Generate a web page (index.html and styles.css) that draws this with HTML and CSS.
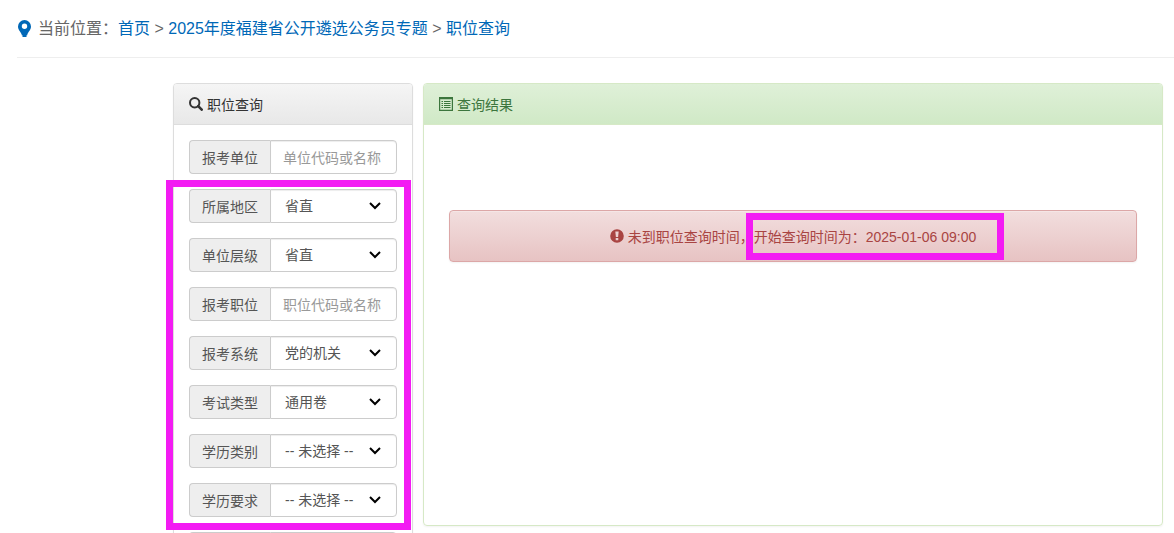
FILE: index.html
```html
<!DOCTYPE html>
<html lang="zh-CN">
<head>
    <meta charset="UTF-8">
    <meta name="viewport" content="width=device-width, initial-scale=1.0">
    <title>职位查询</title>
    <link rel="stylesheet" href="styles.css">
</head>
<body>
    <!-- Breadcrumb -->
    <nav class="location">
        <svg class="pin" viewBox="0 0 14 17"><path fill-rule="evenodd" d="M7 0a6.500 6.500 0 0 1 6.500 6.500c0 3.500-2.600 5-3.700 8v.8h-.8V17H5v-1.700h-.8v-.8C3.100 11.500.5 10 .5 6.500A6.500 6.500 0 0 1 7 0zm0 3.600a2.700 2.700 0 1 0 0 5.400 2.700 2.700 0 0 0 0-5.400z"/></svg>
        <div>当前位置：<a href="#">首页</a> &gt; <a href="#">2025年度福建省公开遴选公务员专题</a> &gt; <a href="#">职位查询</a></div>
    </nav>

    <main class="content">
        <!-- Search form -->
        <section class="panel panel-default">
            <h3 class="panel-heading">
                <svg class="icon" viewBox="0 0 14 14"><circle cx="5.700" cy="5.700" r="4.700" fill="none" stroke="currentColor" stroke-width="2"/><path d="M9.200 9.200l3.500 3.500" stroke="currentColor" stroke-width="2.600" stroke-linecap="round"/></svg>
                职位查询
            </h3>
            <form class="panel-body">
                <div class="input-group">
                    <label for="unit">报考单位</label>
                    <input type="text" id="unit" placeholder="单位代码或名称">
                </div>
                <div class="marked-fields">
                    <div class="input-group">
                        <label for="area">所属地区</label>
                        <select id="area"><option>省直</option></select>
                        <svg class="arrow" viewBox="0 0 12 8"><path d="M1 1l5 5 5-5"/></svg>
                    </div>
                    <div class="input-group">
                        <label for="level">单位层级</label>
                        <select id="level"><option>省直</option></select>
                        <svg class="arrow" viewBox="0 0 12 8"><path d="M1 1l5 5 5-5"/></svg>
                    </div>
                    <div class="input-group">
                        <label for="job">报考职位</label>
                        <input type="text" id="job" placeholder="职位代码或名称">
                    </div>
                    <div class="input-group">
                        <label for="system">报考系统</label>
                        <select id="system"><option>党的机关</option></select>
                        <svg class="arrow" viewBox="0 0 12 8"><path d="M1 1l5 5 5-5"/></svg>
                    </div>
                    <div class="input-group">
                        <label for="exam">考试类型</label>
                        <select id="exam"><option>通用卷</option></select>
                        <svg class="arrow" viewBox="0 0 12 8"><path d="M1 1l5 5 5-5"/></svg>
                    </div>
                    <div class="input-group">
                        <label for="edu-type">学历类别</label>
                        <select id="edu-type"><option>-- 未选择 --</option></select>
                        <svg class="arrow" viewBox="0 0 12 8"><path d="M1 1l5 5 5-5"/></svg>
                    </div>
                    <div class="input-group">
                        <label for="edu">学历要求</label>
                        <select id="edu"><option>-- 未选择 --</option></select>
                        <svg class="arrow" viewBox="0 0 12 8"><path d="M1 1l5 5 5-5"/></svg>
                    </div>
                </div>
                <div class="input-group">
                    <span class="addon"></span>
                    <input type="text" aria-label="其他条件">
                </div>
            </form>
        </section>

        <!-- Results -->
        <section class="panel panel-success">
            <h3 class="panel-heading">
                <svg class="icon" viewBox="0 0 14 14"><path fill-rule="evenodd" d="M0 0h14v14H0zM1.200 2.200v10.600h11.600V2.200z"/><path d="M2.500 4h1.500v1H2.500zM5 4h6.500v1H5zM2.500 6h1.500v1H2.500zM5 6h6.500v1H5zM2.500 8h1.500v1H2.500zM5 8h6.500v1H5zM2.500 10h1.500v1H2.500zM5 10h6.500v1H5z"/></svg>
                查询结果
            </h3>
            <div class="panel-body">
                <div class="alert" role="alert">
                    <svg class="icon" viewBox="0 0 14 14"><path fill-rule="evenodd" d="M7 .2a6.800 6.800 0 1 1 0 13.600A6.800 6.800 0 0 1 7 .2zM5.300 2.600l.6 5.400h2.200l.6-5.400zM5.700 8.900v2.400h2.600V8.900z"/></svg>
                    未到职位查询时间，<span class="marked-time">开始查询时间为：2025-01-06 09:00</span>
                </div>
            </div>
        </section>
    </main>
</body>
</html>
```

FILE: styles.css
```css
* {
    box-sizing: border-box;
}
body {
    margin: 0;
    height: 100vh;
    overflow: hidden;
    background: #fff;
    color: #333;
    font-family: "Liberation Sans", "Noto Sans CJK SC", sans-serif;
    font-size: 14px;
    line-height: 20px;
}

/* Breadcrumb */
.location {
    display: flex;
    align-items: center;
    gap: 6px;
    height: 58px;
    margin-left: 17px;
    border-bottom: 1px solid #eee;
    color: #666;
    font-size: 16px;
}
.location a {
    color: #0068b7;
    text-decoration: none;
}
.pin {
    width: 15px;
    height: 17px;
    fill: #0068b7;
}

/* Panels */
.content {
    display: grid;
    grid-template-columns: 240px 1fr;
    align-items: start;
    gap: 10px;
    margin: 25px 11px 0 173px;
}
.panel {
    border: 1px solid #ddd;
    border-radius: 4px;
    box-shadow: 0 1px 2px rgba(0, 0, 0, 0.05);
}
.panel-heading {
    margin: 0;
    padding: 11px 15px 9px;
    border-bottom: 1px solid #ddd;
    border-radius: 3px 3px 0 0;
    background: linear-gradient(#f5f5f5, #e8e8e8);
    font-size: 14px;
    font-weight: normal;
}
.panel-body {
    padding: 15px;
}
.panel-success {
    min-height: 443px;
    border-color: #d6e9c6;
}
.panel-success .panel-heading {
    border-color: #d6e9c6;
    background: linear-gradient(#dff0d8, #d0e9c6);
    color: #3c763d;
}
.icon {
    width: 14px;
    height: 14px;
    vertical-align: -1px;
    fill: currentColor;
}

/* Form fields */
.input-group {
    position: relative;
    display: flex;
    height: 34px;
    margin-bottom: 15px;
}
.input-group label,
.addon {
    width: 81px;
    padding: 7px 0 5px 12px;
    border: 1px solid #ccc;
    border-right: 0;
    border-radius: 4px 0 0 4px;
    background: #eee;
    color: #555;
}
.input-group input,
.input-group select {
    flex: 1;
    min-width: 0;
    padding: 7px 12px 5px;
    border: 1px solid #ccc;
    border-radius: 0 4px 4px 0;
    background: #fff;
    box-shadow: inset 0 1px 1px rgba(0, 0, 0, 0.075);
    color: #555;
    font: inherit;
}
.input-group input::placeholder {
    color: #999;
}
.input-group select {
    padding: 6px 14px;
    appearance: none;
}
.arrow {
    position: absolute;
    top: 13px;
    right: 16px;
    width: 12px;
    height: 8px;
    fill: none;
    stroke: #000;
    stroke-width: 2;
    pointer-events: none;
}

/* Message */
.alert {
    margin: 70px 10px 0;
    padding: 16px 15px 14px;
    border: 1px solid #dca7a7;
    border-radius: 4px;
    background: linear-gradient(#f2dede, #e7c3c3);
    box-shadow: inset 0 1px 0 rgba(255, 255, 255, 0.25), 0 1px 2px rgba(0, 0, 0, 0.05);
    color: #a94442;
    text-align: center;
}

/* Highlight frames */
.marked-fields,
.marked-time {
    position: relative;
}
.marked-fields::after,
.marked-time::after {
    content: "";
    position: absolute;
    border: 7px solid #f31bf3;
    pointer-events: none;
}
.marked-fields::after {
    inset: -9px -14px -13px -23px;
}
.marked-time::after {
    inset: -16px -28px -15px -8px;
}
```
